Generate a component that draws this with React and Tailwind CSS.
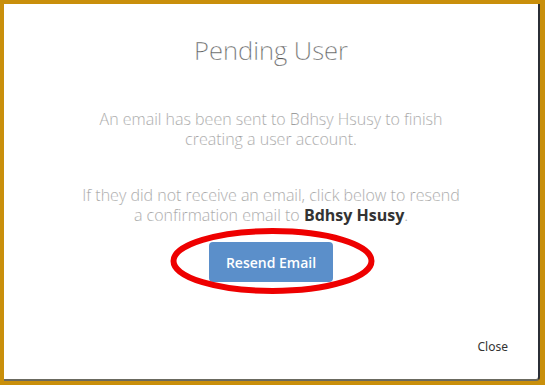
export default function App() {
  return (
    <div className="w-[545px] h-[385px] bg-[#c98f0b] pt-[4px] pl-[4px] pr-[4px] pb-[4px] font-['Open_Sans',sans-serif]">
      <div className="w-[536px] h-[377px] bg-white rounded-br-[4px] border-r-2 border-b-2 border-r-[#2b2f36] border-b-[#6b6a60] flex flex-col items-center">
        {/* Title */}
        <h2 className="mt-[30px] text-[25.5px] font-light text-[#555] leading-[32px] [-webkit-text-stroke:0.3px_white]">
          Pending User
        </h2>

        {/* Body */}
        <div className="mt-[43px] text-[16px] font-light text-[#8a8a8a] leading-[20px] text-center [-webkit-text-stroke:0.2px_white]">
          <p>An email has been sent to Bdhsy Hsusy to finish</p>
          <p>creating a user account.</p>
        </div>
        <div className="mt-[36px] text-[16px] font-light text-[#8a8a8a] leading-[20px] text-center [-webkit-text-stroke:0.2px_white]">
          <p>If they did not receive an email, click below to resend</p>
          <p>
            a confirmation email to <span className="font-bold text-[#333] [-webkit-text-stroke:0px]">Bdhsy Hsusy</span>.
          </p>
        </div>

        {/* Resend button */}
        <div className="relative mt-[17px]">
          <button className="w-[124px] h-[40px] rounded-[4px] bg-[#5b8fca] text-white text-[14px] font-semibold">
            Resend Email
          </button>
          <svg
            className="absolute left-[-39px] top-[-14px] pointer-events-none"
            width="205"
            height="66"
            viewBox="0 0 205 66"
          >
            <ellipse cx="102.5" cy="33" rx="99" ry="30" fill="none" stroke="#ee0000" strokeWidth="6" />
          </svg>
        </div>

        {/* Footer */}
        <div className="mt-auto mb-[23px] w-full flex justify-end pr-[30px]">
          <button className="text-[12px] text-[#333] font-['Noto_Sans',sans-serif]">Close</button>
        </div>
      </div>
    </div>
  );
}
